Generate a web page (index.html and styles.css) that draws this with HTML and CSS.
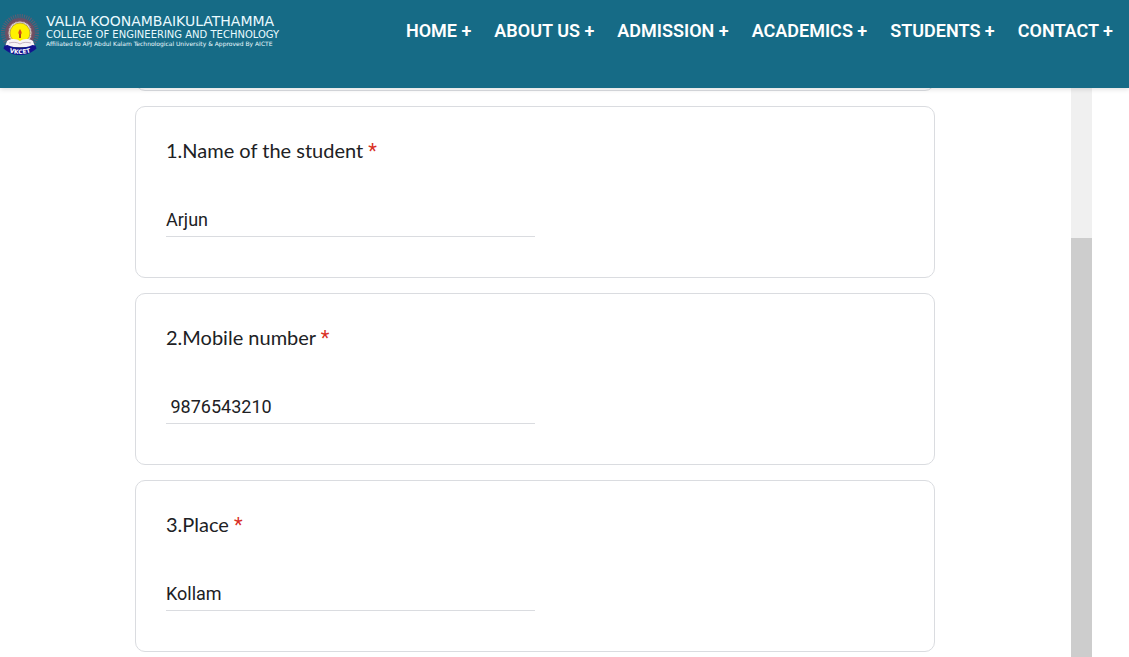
FILE: index.html
```html
<!DOCTYPE html>
<html lang="en">
<head>
<meta charset="utf-8">
<meta name="viewport" content="width=device-width, initial-scale=1">
<title>Valia Koonambaikulathamma College of Engineering and Technology</title>
<link rel="stylesheet" href="styles.css">
</head>
<body>
<header class="site-header">
  <a class="brand" href="#">
    <svg class="emblem" viewBox="0 0 40 46" aria-hidden="true">
      <circle cx="20" cy="21" r="15" fill="#8a4659" opacity=".75"/>
      <circle cx="20" cy="21" r="17" fill="none" stroke="#9a5262" stroke-width="4" stroke-dasharray="1 1.2" opacity=".6"/>
      <circle cx="20" cy="21" r="12" fill="#f3eef0" stroke="#8d5a60" stroke-width="1"/>
      <circle cx="20" cy="21" r="11" fill="none" stroke="#8a8590" stroke-width="1" stroke-dasharray="1 1"/>
      <circle cx="20" cy="21" r="10" fill="#fff200" stroke="#a88b22" stroke-width=".7"/>
      <path d="M20 17c2 3 2 4 1 5.500h-2c-1-1.500-1-2.500 1-5.500z" fill="#d8481c"/>
      <path d="M19 22h2v4h-2z" fill="#a8451c"/>
      <path d="M7 29c5-3 10-2 13 0 3-2 8-3 13 0l2 6H5z" fill="#f7f4f6"/>
      <path d="M9 31c4-1 8-1 11 1 3-2 7-2 11-1" fill="none" stroke="#b9a5b5" stroke-width=".8"/>
      <path d="M4.500 33.500l3-.5c8 3.500 17 3.500 25 0l3 .5 1 3-2.500 2c-8 6-20 6-28 0l-2.500-2z" fill="#12148f"/>
      <path id="ribbon" d="M5 38.500c9 4.500 21 4.500 30 0" fill="none"/>
      <text class="emblem-text" text-anchor="middle"><textPath href="#ribbon" startOffset="50%">VKCET</textPath></text>
    </svg>
    <span class="brand-text">
      <span class="brand-name">VALIA KOONAMBAIKULATHAMMA</span>
      <span class="brand-sub">COLLEGE OF ENGINEERING AND TECHNOLOGY</span>
      <span class="brand-note">Affiliated to APJ Abdul Kalam Technological University &amp; Approved By AICTE</span>
    </span>
  </a>
  <nav class="menu" aria-label="Main">
    <a href="#">HOME +</a>
    <a href="#">ABOUT US +</a>
    <a href="#">ADMISSION +</a>
    <a href="#">ACADEMICS +</a>
    <a href="#">STUDENTS +</a>
    <a href="#">CONTACT +</a>
  </nav>
</header>
<main class="frame">
  <form class="questions">
    <div class="card card-end"></div>
    <div class="card">
      <label class="question" for="name">1.Name of the student <span class="required">*</span></label>
      <input class="answer" id="name" type="text" value="Arjun">
    </div>
    <div class="card">
      <label class="question" for="mobile">2.Mobile number <span class="required">*</span></label>
      <input class="answer" id="mobile" type="text" value=" 9876543210">
    </div>
    <div class="card">
      <label class="question" for="place">3.Place <span class="required">*</span></label>
      <input class="answer" id="place" type="text" value="Kollam">
    </div>
  </form>
  <div class="track"><div class="thumb"></div></div>
</main>
</body>
</html>
```
FILE: styles.css
```css
* {
  box-sizing: border-box;
}

body {
  display: flex;
  flex-direction: column;
  height: 100vh;
  margin: 0;
  overflow: hidden;
  background: #fff;
  color: #202124;
  font-family: Roboto, sans-serif;
}

.site-header {
  display: flex;
  flex: none;
  justify-content: space-between;
  align-items: flex-start;
  padding: 12px 16px 30px 0;
  background: #166b86;
  box-shadow: 0 1px 5px rgba(0, 0, 0, 0.15);
  z-index: 1;
}

.brand {
  display: flex;
  gap: 6px;
  color: #eafaff;
  text-decoration: none;
  font-family: "DejaVu Sans", sans-serif;
}

.emblem {
  width: 40px;
  height: 46px;
}

.emblem-text {
  fill: #fff;
  font: bold 6px "DejaVu Sans", sans-serif;
}

.brand-text {
  display: flex;
  flex-direction: column;
  white-space: nowrap;
}

.brand-name {
  font-size: 14px;
  line-height: 18px;
}

.brand-sub {
  font-size: 10px;
  line-height: 10px;
}

.brand-note {
  font-size: 6px;
  line-height: 8px;
}

.menu {
  display: flex;
  gap: 23px;
  padding-top: 8px;
}

.menu a {
  color: #fff;
  font-size: 18px;
  font-weight: 600;
  line-height: 22px;
  text-decoration: none;
  white-space: nowrap;
}

.frame {
  display: flex;
  flex: 1;
  min-height: 0;
  padding-right: 37px;
}

.questions {
  display: flex;
  flex: 1;
  flex-direction: column;
  align-items: center;
  gap: 15px;
  overflow: hidden;
  padding-right: 1px;
}

.card {
  flex: none;
  width: 100%;
  max-width: 800px;
  padding: 31px 30px 40px;
  border: 1px solid #dadce0;
  border-radius: 10px;
}

.card-end {
  height: 20px;
  margin-top: -17px;
  padding: 0;
}

.question {
  display: block;
  margin-bottom: 43px;
  font-family: "Google Sans", Lato, sans-serif;
  font-size: 20px;
  line-height: 24px;
}

.required {
  color: #d93025;
  font-family: Roboto, sans-serif;
  line-height: 20px;
}

.answer {
  display: block;
  width: 50%;
  height: 32px;
  padding: 0 0 2px;
  border: 0;
  border-bottom: 1px solid #dadce0;
  background: transparent;
  color: #202124;
  font: 18px Roboto, sans-serif;
  outline: 0;
}

.track {
  width: 21px;
  padding-top: 150px;
  background: #f0f0f0;
}

.thumb {
  height: 100%;
  background: #cdcdcd;
}
```
